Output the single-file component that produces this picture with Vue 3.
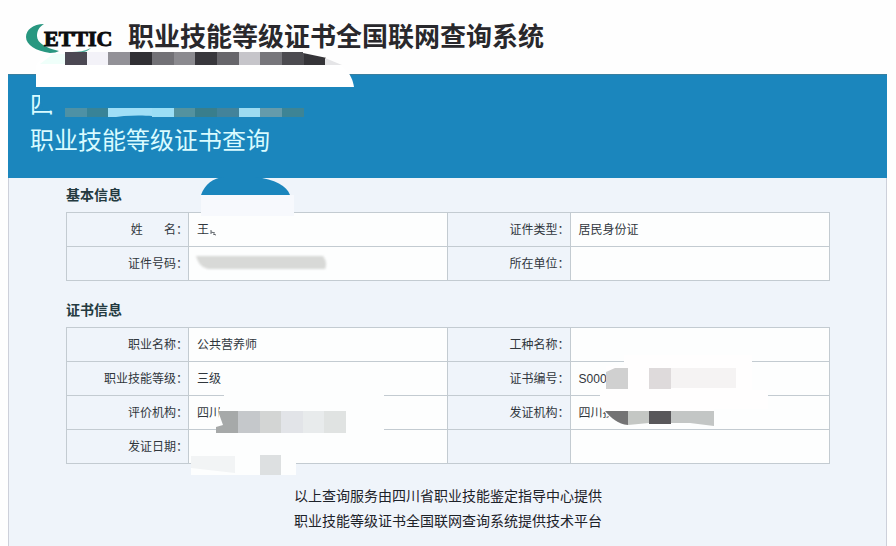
<template>
  <div class="page">
    <header class="site-header">
      <svg class="logo" viewBox="0 0 90 34" role="img" aria-label="CETTIC">
        <path
          d="M18 4C7 4 0 10 0 17c0 8 10 14 24 16 4 0 7-1 9-2C20 28 11 23 11 16 11 11 13 7 18 4Z"
          fill="#289780"
        />
        <path d="M46 32c7 0 12-1 19-4-4 4-10 6-19 4Z" fill="#4fae9c" />
        <text x="18" y="26">ETTIC</text>
      </svg>
      <h1>职业技能等级证书全国联网查询系统</h1>
    </header>

    <main class="panel">
      <div class="banner">
        <p class="banner-region">四</p>
        <h2>职业技能等级证书查询</h2>
      </div>

      <div class="content">
        <section v-for="section in sections" :key="section.title" class="info">
          <h3>{{ section.title }}</h3>
          <table>
            <tbody>
              <tr v-for="row in section.rows" :key="row[0].label">
                <template v-for="(field, i) in row" :key="i">
                  <th scope="row">{{ field.label }}</th>
                  <td>{{ field.value }}</td>
                </template>
              </tr>
            </tbody>
          </table>
        </section>

        <footer class="credits">
          <p>以上查询服务由四川省职业技能鉴定指导中心提供</p>
          <p>职业技能等级证书全国联网查询系统提供技术平台</p>
        </footer>
      </div>
    </main>

    <!-- redaction marks laid over the private details -->
    <svg class="redaction" viewBox="0 0 896 546" aria-hidden="true">
      <path d="M36 66V87H354C353 80 350 74 346 70 338 62 325 57 300 54H60C48 54 40 58 36 66Z" fill="#fff" />
      <path d="M40 64 53 54H65V64Z" fill="#effffa" />
      <rect
        v-for="b in blocks"
        :key="`${b.x}-${b.y}`"
        :x="b.x"
        :y="b.y"
        :width="b.w"
        :height="b.h"
        :fill="b.fill"
      />
      <path d="M303 51H327V58L303 53Z" fill="#fefefe" />
      <path d="M325 58 342 65H325Z" fill="#e5e5e7" />
      <path d="M40 88H60V116L53 111 43 109 40 102Z" fill="#1b86bd" />
      <path d="M108 118C125 115 142 115 152 116V118Z" fill="#1b86bd" />

      <path d="M201 195V216H294V195Z" fill="#f7f9fd" />
      <path d="M201 195C205 184 213 178 224 177H255C275 179 287 186 290 195Z" fill="#1b86bd" />
      <path d="M211 230v4M211 232l4 1M213 234l3 1" stroke="#5c6268" fill="none" />
      <path
        class="smear"
        d="M196 256H323Q328 262 325 269H208C200 267 198 262 196 256Z"
        fill="#d8d9d7"
      />

      <path d="M224 384H384V435H296V475H191V456H217V432L219 410 224 400Z" fill="#fdfefe" />
      <path d="M218 411H238V433H216V427L223 425Z" fill="#a6a9a9" />
      <path d="M191 456H235V473L191 468Z" fill="#f2f4f5" />
      <rect x="238" y="411" width="22" height="22" fill="#c5c8cb" />
      <rect x="260" y="411" width="21" height="22" fill="#d3d5d4" />
      <rect x="281" y="411" width="22" height="22" fill="#e2e4e8" />
      <rect x="303" y="411" width="21" height="22" fill="#e8ebec" />
      <rect x="324" y="411" width="22" height="22" fill="#e0e3e2" />
      <rect x="260" y="455" width="21" height="20" fill="#dde0e1" />

      <path d="M624 355H752V390H768V409H714V418H610L600 407V390L606 384V366H624Z" fill="#fffefe" />
      <path d="M606 372 615 368H628V389H606Z" fill="#d0d0d0" />
      <rect x="649" y="368" width="22" height="21" fill="#dedadb" />
      <rect x="671" y="368" width="65" height="20" fill="#f5f3f3" />
      <path d="M605 411H628V425C618 424 611 418 605 411Z" fill="#737374" />
      <path d="M628 411H649V423L628 425Z" fill="#c4c7c4" />
      <rect x="649" y="411" width="22" height="13" fill="#58575a" />
      <path d="M671 411H714V426L690 423H671Z" fill="#c3c6c5" />
    </svg>
  </div>
</template>

<script setup>
const sections = [
  {
    title: '基本信息',
    rows: [
      [
        { label: '姓\u3000\u2002 名：', value: '王' },
        { label: '证件类型：', value: '居民身份证' },
      ],
      [
        { label: '证件号码：', value: '' },
        { label: '所在单位：', value: '' },
      ],
    ],
  },
  {
    title: '证书信息',
    rows: [
      [
        { label: '职业名称：', value: '公共营养师' },
        { label: '工种名称：', value: '' },
      ],
      [
        { label: '职业技能等级：', value: '三级' },
        { label: '证书编号：', value: 'S000' },
      ],
      [
        { label: '评价机构：', value: '四川' },
        { label: '发证机构：', value: '四川技' },
      ],
      [
        { label: '发证日期：', value: '' },
        { label: '', value: '' },
      ],
    ],
  },
]

const strip = (fills, y, h) =>
  fills.map((fill, i) => ({ x: 65 + Math.round(i * 21.7), y, w: 22, h, fill }))

const blocks = [
  ...strip(
    ['#4b4853', '#f3f2f8', '#929197', '#302f34', '#727176', '#8b8a8f', '#38373c', '#67666b', '#c6c5ca', '#77767b', '#4c4b50', '#353438'],
    52,
    13,
  ),
  { x: 54, y: 90, w: 251, h: 18, fill: '#1b86bd' },
  ...strip(
    ['#4e91a5', '#388397', '#a0dff7', '#a0dff7', '#9bdef5', '#53929f', '#397e8c', '#43839a', '#9ddbf1', '#659bab', '#3d8495'],
    108,
    9,
  ),
]
</script>

<style>
body {
  margin: 0;
  background: #fefefe;
}
</style>

<style scoped>
.page {
  position: relative;
  display: flex;
  flex-direction: column;
  min-height: 100vh;
  overflow: hidden;
  color: #30363c;
  font-family: 'Liberation Sans', 'Noto Sans CJK SC', sans-serif;
}

h1,
h2,
h3,
p {
  margin: 0;
}

.site-header {
  display: flex;
  align-items: center;
  gap: 12px;
  height: 74px;
  padding: 0 26px;
  box-sizing: border-box;
}

.logo {
  width: 90px;
  height: 34px;
  flex-shrink: 0;
}

.logo text {
  fill: #0c0c0e;
  stroke: #0c0c0e;
  font-family: 'Liberation Serif', serif;
  font-size: 22px;
  font-weight: 700;
}

.site-header h1 {
  color: #29282c;
  font-size: 26px;
  line-height: 36px;
  white-space: nowrap;
}

.panel {
  display: flex;
  flex: 1;
  flex-direction: column;
  margin: 0 9px 0 8px;
}

.banner {
  height: 104px;
  padding: 12px 22px;
  box-sizing: border-box;
  border-top: 1px solid #397f9f;
  background: #1b86bd;
  color: #d9fbff;
}

.banner-region,
.banner h2 {
  font-size: 24px;
  font-weight: 400;
  line-height: 36px;
}

.content {
  flex: 1;
  padding: 0 56px 0 57px;
  border: 1px solid #cdd0da;
  border-width: 0 1px;
  background: #eff4fa;
}

.info + .info {
  margin-top: 12px;
}

.info h3 {
  color: #243a40;
  font-size: 14px;
  line-height: 34px;
}

table {
  width: 100%;
  border-collapse: collapse;
  table-layout: fixed;
}

th,
td {
  height: 34px;
  padding: 0 8px;
  box-sizing: border-box;
  border: 1px solid #c3cbd1;
  font-size: 12px;
  font-weight: 400;
  line-height: 18px;
}

th {
  width: 16%;
  padding: 0;
  text-align: right;
  white-space: pre;
}

td {
  width: 34%;
  background: #fdfefe;
  text-align: left;
}

.credits {
  margin-top: 20px;
  color: #1d2229;
  font-size: 14px;
  line-height: 25px;
  text-align: center;
}

.redaction {
  position: absolute;
  top: 0;
  left: 0;
  width: 896px;
  height: 546px;
  pointer-events: none;
}

.smear {
  filter: blur(1px);
}
</style>
